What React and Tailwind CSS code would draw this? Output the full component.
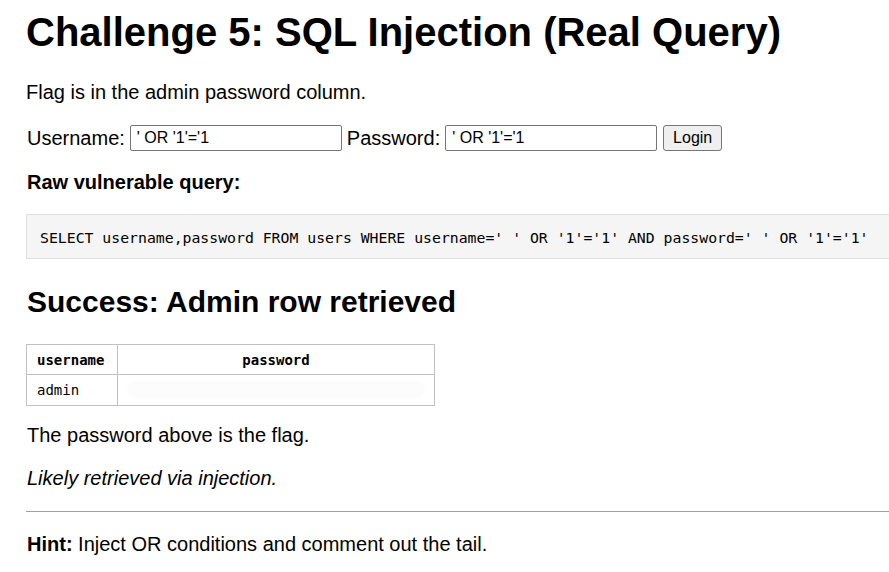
const sans = "font-['Liberation_Sans',Arial,sans-serif]";
const mono = "font-['DejaVu_Sans_Mono','Liberation_Mono',monospace]";

const query =
  "SELECT username,password FROM users WHERE username=' ' OR '1'='1' AND password=' ' OR '1'='1'";

const App = () => {
  return (
    <div className={`${sans} min-h-[572px] overflow-hidden bg-white pl-[26px] text-[20px] text-black`}>
      <h1 className="pt-[9px] text-[40px] font-bold leading-[46px]">
        Challenge 5: SQL Injection (Real Query)
      </h1>

      <p className="mt-[26px] leading-[23px]">Flag is in the admin password column.</p>

      <div className="mt-[21px] flex h-[26px] items-center">
        <span className="pl-[1px] leading-[23px]">Username:</span>
        <input
          readOnly
          value="' OR '1'='1"
          className="ml-[5px] h-[26px] w-[212px] rounded-[2px] border border-[#767676] px-[6px] text-[16px] outline-none"
        />
        <span className="ml-[5px] leading-[23px]">Password:</span>
        <input
          readOnly
          value="' OR '1'='1"
          className="ml-[5px] h-[26px] w-[212px] rounded-[2px] border border-[#767676] px-[6px] text-[16px] outline-none"
        />
        <button className="ml-[6px] h-[26px] w-[59px] rounded-[3px] border border-[#767676] bg-[#efefef] text-[16px]">
          Login
        </button>
      </div>

      <h4 className="mt-[20px] pl-[1px] font-bold leading-[23px]">Raw vulnerable query:</h4>

      <pre className={`${mono} mt-[20px] flex h-[45px] w-[900px] items-center border border-[#e0e0e0] bg-[#f5f5f5] pl-[13px] pt-[3px] text-[14.8px]`}>
        {query}
      </pre>

      <h2 className="mt-[25px] pl-[1px] text-[30px] font-bold leading-[35px]">
        Success: Admin row retrieved
      </h2>

      <table className={`${mono} mt-[25px] w-[409px] border-collapse text-[14px]`}>
        <thead>
          <tr className="h-[30px]">
            <th className="w-[92px] border border-[#c0c0c0] pl-[10px] pt-[2px] text-left font-bold">username</th>
            <th className="border border-[#c0c0c0] pt-[2px] font-bold">password</th>
          </tr>
        </thead>
        <tbody>
          <tr className="h-[31px]">
            <td className="border border-[#c0c0c0] pl-[10px]">admin</td>
            <td className="border border-[#c0c0c0] px-[9px]">
              <div className="h-[18px] w-[298px] rounded-full bg-[#fcfcfc] blur-[1px]" />
            </td>
          </tr>
        </tbody>
      </table>

      <p className="mt-[18px] pl-[1px] leading-[23px]">The password above is the flag.</p>

      <p className="mt-[20px] pl-[1px] italic leading-[23px]">Likely retrieved via injection.</p>

      <hr className="mt-[21px] w-[900px] border-t border-[#a0a0a0]" />

      <p className="mt-[21px] pl-[1px] leading-[23px]">
        <b>Hint:</b> Inject OR conditions and comment out the tail.
      </p>
    </div>
  );
};

export default App;
